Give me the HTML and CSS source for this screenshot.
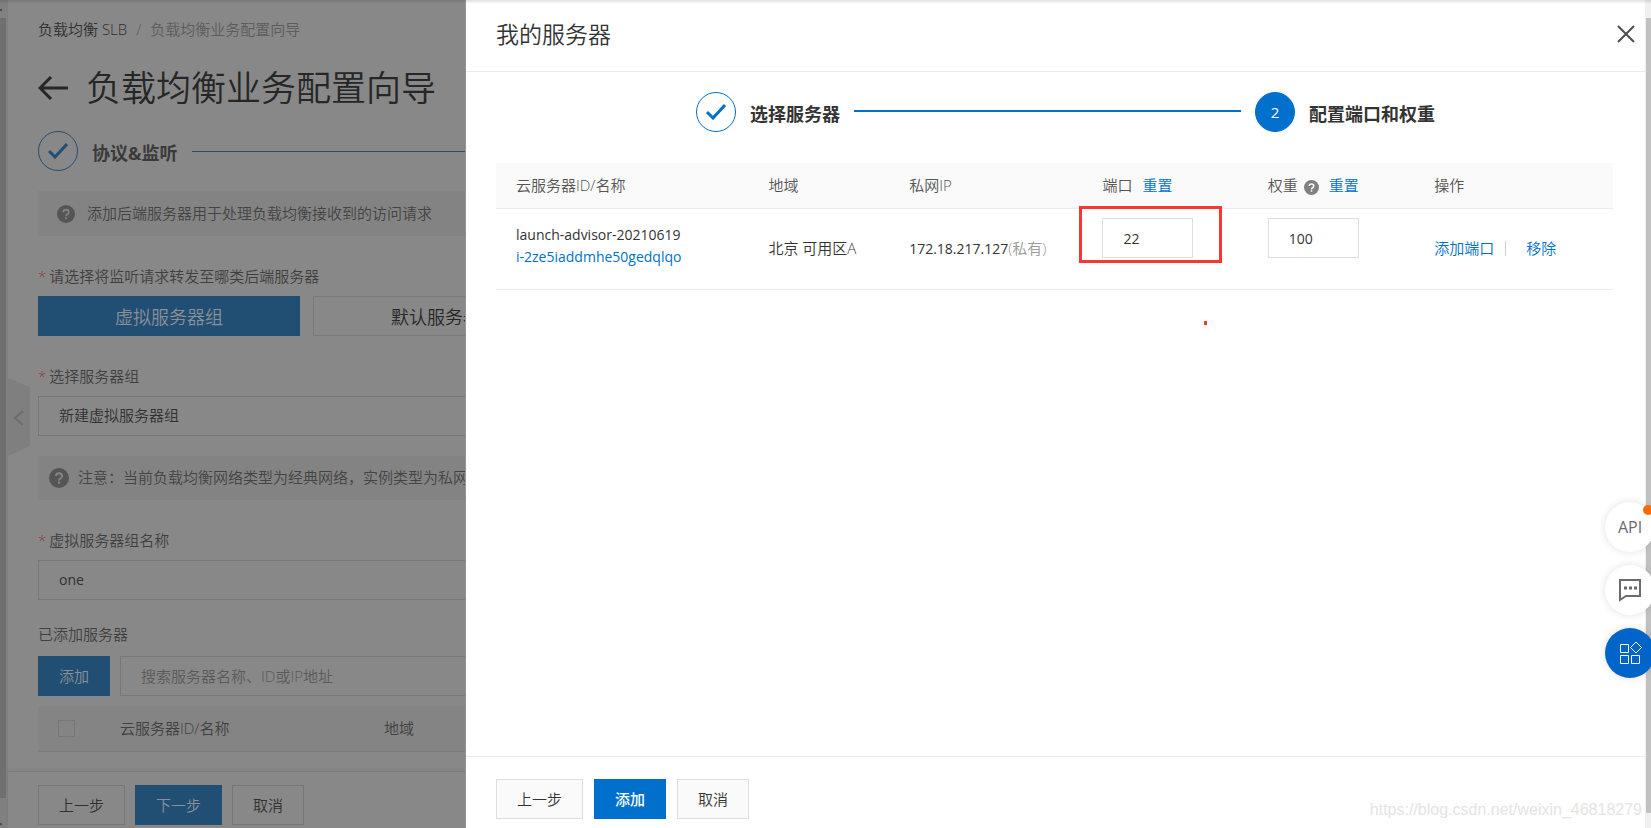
FILE: index.html
```html
<!DOCTYPE html>
<html lang="zh-CN">
<head>
<meta charset="utf-8">
<title>负载均衡业务配置向导</title>
<link rel="stylesheet" href="styles.css">
</head>
<body>
<div class="app">
  <section class="wizard">
    <div class="rail" aria-hidden="true"><span class="rail-cap"></span><span class="rail-thumb"></span><span class="rail-cap end"></span></div>
    <button class="collapse" type="button" aria-label="收起">
      <svg viewBox="0 0 22 78" width="22" height="78"><path d="M0 0L22 9V68L0 78Z" fill="#7f7f7f"/><path d="M15 33L7 40L15 47" fill="none" stroke="#6d6d6d" stroke-width="2"/></svg>
    </button>
    <div class="wizard-main">
      <div class="wizard-body">
        <nav class="crumbs"><a href="#">负载均衡 SLB</a><span>/</span><span>负载均衡业务配置向导</span></nav>
        <div class="page-head">
          <svg class="back" viewBox="0 0 30 24" width="30" height="24" fill="none" stroke="#262626" stroke-width="3"><path d="M2 12H30M13 1L2 12L13 23"/></svg>
          <h1>负载均衡业务配置向导</h1>
        </div>
        <div class="w-step">
          <span class="w-circle"><svg viewBox="0 0 20 16" width="20" height="16" fill="none" stroke="#214f74" stroke-width="3"><path d="M1 8L7 14L19 1"/></svg></span>
          <strong>协议&amp;监听</strong><i></i>
        </div>
        <div class="notice first">
          <svg class="q18" viewBox="0 0 20 20"><circle cx="10" cy="10" r="10" fill="#555"/><path d="M7 8Q7 5.200 10 5.200T13 8Q13 9.500 11.500 10.300Q10 11 10 12.500M10 13.600V15.800" fill="none" stroke="#848484" stroke-width="2"/></svg>
          <span>添加后端服务器用于处理负载均衡接收到的访问请求</span>
        </div>
        <div class="label l1"><b>*</b>请选择将监听请求转发至哪类后端服务器</div>
        <div class="types">
          <button type="button" class="type on">虚拟服务器组</button>
          <button type="button" class="type">默认服务器组</button>
        </div>
        <label class="label l2" for="grp"><b>*</b>选择服务器组</label>
        <select class="field" id="grp"><option>新建虚拟服务器组</option></select>
        <div class="notice second">
          <svg class="q20" viewBox="0 0 20 20"><circle cx="10" cy="10" r="10" fill="#555"/><path d="M7 8Q7 5.200 10 5.200T13 8Q13 9.500 11.500 10.300Q10 11 10 12.500M10 13.600V15.800" fill="none" stroke="#848484" stroke-width="2"/></svg>
          <span>注意：当前负载均衡网络类型为经典网络，实例类型为私网</span>
        </div>
        <label class="label l3" for="name"><b>*</b>虚拟服务器组名称</label>
        <input class="field latin" id="name" type="text" value="one">
        <div class="label l4">已添加服务器</div>
        <div class="search-row">
          <button type="button" class="wbtn primary">添加</button>
          <input class="field" type="search" aria-label="搜索服务器" placeholder="搜索服务器名称、ID或IP地址">
        </div>
        <table class="added">
          <tr><th class="ck"><input type="checkbox" aria-label="全选"></th><th class="id">云服务器ID/名称</th><th>地域</th></tr>
        </table>
      </div>
      <footer class="wizard-foot">
        <button type="button" class="wbtn">上一步</button>
        <button type="button" class="wbtn primary">下一步</button>
        <button type="button" class="wbtn">取消</button>
      </footer>
    </div>
  </section>

  <section class="drawer" aria-label="我的服务器">
    <header class="drawer-head">
      <h2>我的服务器</h2>
      <button type="button" class="close" aria-label="关闭"><svg viewBox="0 0 18 18" width="18" height="18"><path d="M1 1L17 17M17 1L1 17" stroke="#4a4d52" stroke-width="2"/></svg></button>
    </header>
    <div class="drawer-body">
      <div class="steps">
        <span class="circle"><svg viewBox="0 0 20 16" width="20" height="16" fill="none" stroke="#0070cc" stroke-width="3"><path d="M1 8L7 14L19 1"/></svg></span>
        <strong>选择服务器</strong>
        <i></i>
        <span class="circle now">2</span>
        <strong>配置端口和权重</strong>
      </div>
      <table class="servers">
        <colgroup><col class="c1"><col class="c2"><col class="c3"><col class="c4"><col class="c5"><col class="c6"></colgroup>
        <thead><tr>
          <th>云服务器ID/名称</th><th>地域</th><th>私网IP</th>
          <th>端口<a class="reset" href="#">重置</a></th>
          <th>权重<svg class="q15" viewBox="0 0 20 20"><circle cx="10" cy="10" r="10" fill="#808080"/><path d="M7 8Q7 5.200 10 5.200T13 8Q13 9.500 11.500 10.300Q10 11 10 12.500M10 13.600V15.800" fill="none" stroke="#fafafa" stroke-width="2"/></svg><a class="reset" href="#">重置</a></th>
          <th>操作</th>
        </tr></thead>
        <tbody><tr>
          <td class="who latin">launch-advisor-20210619<br><a href="#">i-2ze5iaddmhe50gedqlqo</a></td>
          <td>北京 可用区A</td>
          <td><span class="latin">172.18.217.127</span><span class="muted">(私有)</span></td>
          <td><div class="num"><input class="latin" type="text" value="22" aria-label="端口"><span class="mark"></span><span class="speck"></span></div></td>
          <td><div class="num"><input class="latin" type="text" value="100" aria-label="权重"></div></td>
          <td><a class="act" href="#">添加端口</a><a href="#">移除</a></td>
        </tr></tbody>
      </table>
    </div>
    <footer class="drawer-foot">
      <button type="button" class="btn">上一步</button>
      <button type="button" class="btn primary">添加</button>
      <button type="button" class="btn">取消</button>
      <span class="watermark">https://blog.csdn.net/weixin_46818279</span>
    </footer>
  </section>
  <div class="scroll" aria-hidden="true"><span></span></div>
  <div class="topshade"></div>

  <div class="floats">
    <button type="button" class="float api">API<span class="dot"></span></button>
    <button type="button" class="float" aria-label="反馈"><svg viewBox="0 0 24 24" width="24" height="24"><path d="M2 2H22V18H8L2 22Z" fill="none" stroke="#6b6b6b" stroke-width="2"/><path d="M6 10H9M11 10H14M16 10H19" stroke="#6b6b6b" stroke-width="3"/></svg></button>
    <button type="button" class="float blue" aria-label="应用"><svg viewBox="0 0 24 24" width="24" height="24" fill="none" stroke="#fff" stroke-width="1"><path d="M2.500 3.500H10.500V11.500H2.500ZM2.500 14.500H10.500V22.500H2.500ZM13.500 14.500H21.500V22.500H13.500ZM18 1L23.500 6.500L18 12L12.500 6.500Z"/></svg></button>
  </div>
</div>
</body>
</html>
```
FILE: styles.css
```css
* { box-sizing: border-box; }
body, button, input, select { font-family: "Open Sans", "Noto Sans CJK SC", sans-serif; font-size: 15px; font-weight: 350; }
body { margin: 0; color: #333; line-height: 22px; overflow: hidden; }
button, input, select { margin: 0; border-radius: 0; appearance: none; }
button { padding: 0; cursor: pointer; }
svg { display: block; flex: none; }
a { color: #0070cc; text-decoration: none; }
h1, h2 { margin: 0; font-weight: 350; }
table { border-collapse: collapse; }
th { font-weight: 350; text-align: left; }
strong { font-weight: 700; }
.latin { font-size: 14px; font-weight: 400; }

.app { position: relative; display: grid; grid-template-columns: 466px 1fr 6px; height: 100vh; overflow: hidden; }

.wizard { position: relative; display: flex; background: #888; color: #3a3a3a; overflow: hidden; min-width: 0; border-right: 1px solid #949494; }
.rail { flex: none; width: 8px; background: #808080; display: flex; flex-direction: column; overflow: hidden; }
.rail-thumb { flex: 1; width: 6px; background: #6f6f6f; }
.rail-cap { height: 18px; }
.rail-cap::after { content: ""; display: block; margin-top: 9px; width: 2px; height: 2px; background: #4a4a4a; }
.rail-cap.end { height: 30px; padding-top: 16px; }
.collapse { position: absolute; left: 8px; top: 378px; border: 0; background: none; }
.wizard-main { flex: 1; min-width: 0; display: flex; flex-direction: column; }
.wizard-body { flex: 1; min-height: 0; padding: 18px 0 0 30px; overflow: hidden; white-space: nowrap; }
.crumbs { display: flex; gap: 9px; color: #5c5c5c; }
.crumbs a { color: #2f2f2f; }
.page-head { display: flex; align-items: center; gap: 18px; height: 50px; margin-top: 23px; color: #262626; }
.page-head h1 { font-size: 35px; line-height: 50px; }
.w-step { display: flex; align-items: center; gap: 14px; height: 40px; margin-top: 18px; }
.w-step strong, .steps strong { font-size: 18px; line-height: 24px; padding-top: 4px; }
.w-circle { width: 40px; height: 40px; border: 1px solid #214f74; border-radius: 50%; display: flex; align-items: center; justify-content: center; flex: none; }
.w-step i { flex: 1; height: 1px; background: #214f74; }
.notice { display: flex; align-items: center; background: #838383; overflow: hidden; color: #444; }
.notice span { white-space: nowrap; padding-bottom: 2px; }
.first { height: 45px; margin-top: 20px; padding-left: 19px; gap: 12px; }
.second { height: 44px; margin-top: 20px; padding-left: 11px; gap: 9px; }
.q18 { width: 18px; height: 18px; }
.q20 { width: 20px; height: 20px; }
.label { display: block; height: 22px; color: #404040; }
.label b { color: #8a3a3a; font-weight: 350; margin-right: 3px; }
.l1 { margin-top: 29px; }
.types { display: flex; gap: 13px; margin-top: 9px; }
.type { flex: none; width: 264px; height: 40px; font-size: 18px; background: none; border: 1px solid #7a7a7a; color: #262626; }
.type.on { width: 262px; background: #214f74; border-color: #214f74; color: #8c9096; }
.l2 { margin-top: 29px; }
.field { display: block; width: 600px; height: 40px; margin-top: 9px; padding: 0 20px 2px; border: 1px solid #777; background: none; color: #303030; outline: 0; }
.l3 { margin-top: 29px; }
.l4 { margin-top: 23px; }
.search-row { display: flex; gap: 10px; margin-top: 11px; }
.search-row .field { margin: 0; flex: none; padding-bottom: 0; }
.field::placeholder { color: #5a5a5a; opacity: 1; }
.wbtn { flex: none; height: 40px; padding: 0 20px 2px; background: none; border: 1px solid #767676; color: #303030; }
.wbtn.primary { background: #214f74; border-color: #214f74; color: #8c9096; }
.added { width: 600px; margin-top: 10px; height: 46px; background: #848484; border-bottom: 1px solid #7b7b7b; color: #404040; }
.added th { padding: 0 0 2px; }
.added .ck { width: 82px; padding: 0 0 0 20px; }
.added .id { width: 264px; }
.added input { display: block; width: 17px; height: 17px; border: 1px solid #777; }
.wizard-foot { display: flex; gap: 10px; height: 57px; padding: 13px 0 0 30px; border-top: 1px solid #7a7a7a; box-shadow: 0 -1px 3px rgba(0,0,0,.06); }

.drawer { display: flex; flex-direction: column; background: #fff; min-width: 0; }
.drawer-head { display: flex; align-items: center; justify-content: space-between; height: 72px; padding: 0 10px 4px 30px; border-bottom: 1px solid #ebebeb; }
.drawer-head h2 { font-size: 23px; line-height: 32px; }
.close { border: 0; background: none; }
.drawer-body { flex: 1; padding: 20px 32px 0 30px; }
.steps { display: flex; align-items: center; gap: 14px; height: 40px; padding: 0 178px 0 200px; }
.steps i { flex: 1; height: 2px; margin-bottom: 2px; background: #0070cc; }
.steps strong { flex: none; }
.circle { flex: none; width: 40px; height: 40px; border: 1px solid #0070cc; border-radius: 50%; display: flex; align-items: center; justify-content: center; }
.now { background: #0070cc; color: #fff; font-weight: 400; }
.servers { width: 100%; margin-top: 31px; table-layout: fixed; }
.c1 { width: 22.6%; } .c2 { width: 12.6%; } .c3 { width: 17.3%; } .c4 { width: 14.8%; } .c5 { width: 14.9%; } .c6 { width: 17.8%; }
.servers th, .servers td { padding: 0 0 0 20px; border-bottom: 1px solid #ebebeb; white-space: nowrap; }
.servers th { height: 45px; background: #fafafa; color: #555; }
.servers td { height: 81px; padding-bottom: 1px; }
.servers .who { padding-bottom: 6px; }
.reset { margin-left: 10px; }
.q15 { display: inline-block; width: 15px; height: 15px; margin-left: 6px; vertical-align: -4px; }
.muted { color: #999; }
.num { position: relative; height: 60px; }
.num input { display: block; width: 91px; height: 40px; padding: 0 20px; border: 1px solid #dedede; outline: 0; color: #333; }
.mark { position: absolute; left: -23px; top: -12px; width: 143px; height: 57px; border: 3px solid #fa3534; }
.speck { position: absolute; left: 102px; top: 103px; width: 3px; height: 4px; background: #fa3534; }
.act { padding-right: 11px; margin-right: 20px; border-right: 1px solid #ccc; line-height: 15px; display: inline-block; }
.drawer-foot { position: relative; display: flex; gap: 11px; height: 72px; padding: 22px 0 0 30px; border-top: 1px solid #ebebeb; }
.btn { height: 40px; padding: 0 20px 2px; background: #fafafa; border: 1px solid #dedede; color: #333; }
.btn.primary { background: #0070cc; border-color: #0070cc; color: #fff; font-weight: 500; }
.watermark { position: absolute; right: 3px; bottom: 8px; font: 16px/20px "Liberation Sans", sans-serif; color: #e4e4e4; }

.scroll { background: #f0f0f0; padding: 18px 0 15px 1px; display: flex; }
.scroll span { flex: 1; background: #c1c1c1; }
.topshade { position: absolute; left: 0; right: 0; top: 0; height: 4px; background: linear-gradient(rgba(0,0,0,.12), rgba(0,0,0,0)); }
.floats { position: absolute; right: -4px; top: 502px; display: grid; gap: 13px; }
.float { position: relative; width: 50px; height: 50px; border: 0; border-radius: 50%; background: #fff; box-shadow: 0 0 8px rgba(0,0,0,.12); display: flex; align-items: center; justify-content: center; color: #6b6b6b; }
.api { font: 16px "Liberation Sans Narrow", "Open Sans", sans-serif; }
.blue { background: #0064c8; }
.dot { position: absolute; right: 2px; top: 3px; width: 10px; height: 10px; border-radius: 50%; background: #ff6a00; }
```
